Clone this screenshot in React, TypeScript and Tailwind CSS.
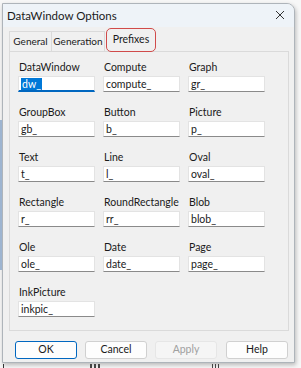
import React from "react";

const rows: [string, string][][] = [
  [["DataWindow", "dw_"], ["Compute", "compute_"], ["Graph", "gr_"]],
  [["GroupBox", "gb_"], ["Button", "b_"], ["Picture", "p_"]],
  [["Text", "t_"], ["Line", "l_"], ["Oval", "oval_"]],
  [["Rectangle", "r_"], ["RoundRectangle", "rr_"], ["Blob", "blob_"]],
  [["Ole", "ole_"], ["Date", "date_"], ["Page", "page_"]],
  [["InkPicture", "inkpic_"]],
];

function Field({ label, value, focused }: { label: string; value: string; focused?: boolean }) {
  return (
    <div className="flex flex-col">
      <div className="h-[14px] leading-[14px] text-[10.5px] text-[#1a1a1a] pl-[1px]">{label}</div>
      <div
        className={
          "mt-[2px] h-[16px] bg-white border border-[#e3e3e3] flex items-center pl-[2px] text-[10.5px] leading-none text-[#1a1a1a] " +
          (focused ? "border-b-[#0067c0] border-b-2" : "border-b-[#8a8a8a]")
        }
      >
        {focused ? (
          <span className="bg-[#0078d7] text-white px-[1px] leading-[12px]">dw_</span>
        ) : (
          <span>{value}</span>
        )}
      </div>
    </div>
  );
}

function Button({ children, primary, disabled }: { children: React.ReactNode; primary?: boolean; disabled?: boolean }) {
  return (
    <div
      className={
        "w-[62px] h-[18px] rounded-[3px] flex items-center justify-center text-[10.5px] " +
        (primary
          ? "border-[1.5px] border-[#0067c0] bg-[#fdfdfd] text-[#1a1a1a]"
          : disabled
          ? "border border-[#e6e6e6] bg-[#f5f5f5] text-[#a0a0a0]"
          : "border border-[#d0d0d0] bg-[#fdfdfd] text-[#1a1a1a]")
      }
    >
      {children}
    </div>
  );
}

export default function App() {
  return (
    <div
      className="w-[301px] h-[368px] bg-[#f7f7f7] overflow-hidden relative"
      style={{ fontFamily: 'Lato, "Noto Sans", sans-serif' }}
    >
      <div className="absolute left-0 top-[120px] w-[2px] h-[150px] bg-[#9db4d0]" />
      <div className="ml-[2px] mt-[3px] w-[293px] h-[360px] bg-[#f0f0f0] border border-[#aeb4ba] rounded-tr-[8px] shadow-[1px_2px_4px_rgba(0,0,0,0.25)] flex flex-col overflow-hidden">
        {/* Title bar */}
        <div className="h-[23px] bg-[#eef3f8] flex items-center justify-between pl-[4px] pr-[6px]">
          <span className="text-[11.5px] text-[#1a1a1a]">DataWindow Options</span>
          <svg width="10" height="10" viewBox="0 0 10 10" className="mb-[1px] mr-[3px]">
            <path d="M1 1 L9 9 M9 1 L1 9" stroke="#333" strokeWidth="1" />
          </svg>
        </div>
        {/* Tabs */}
        <div className="flex items-end pl-[6px] h-[24px] relative">
          <div className="h-[20px] w-[43px] border border-[#dadada] border-b-0 bg-[#f0f0f0] flex items-center justify-center text-[10px] text-[#1a1a1a]">
            General
          </div>
          <div className="h-[20px] w-[53px] border border-l-0 border-[#dadada] border-b-0 bg-[#f0f0f0] flex items-center justify-center text-[10px] text-[#1a1a1a]">
            Generation
          </div>
          <div className="ml-[1px] h-[24px] w-[50px] border-[1.5px] border-[#d04a4a] rounded-[5px] flex items-start justify-center pt-[3px] text-[10.5px] text-[#1a1a1a] relative top-[1px] bg-[#f0f0f0] z-10">
            Prefixes
          </div>
        </div>
        {/* Panel */}
        <div className="ml-[6px] w-[280px] h-[280px] border border-[#dadada] pl-[8px] pt-[8px]">
          <div className="flex flex-col gap-[13px]">
            {rows.map((row, i) => (
              <div key={i} className="grid grid-cols-[77px_77px_77px] gap-x-[8px]">
                {row.map(([l, v], j) => (
                  <Field key={j} label={l} value={v} focused={i === 0 && j === 0} />
                ))}
              </div>
            ))}
          </div>
        </div>
        {/* Buttons */}
        <div className="flex pl-[12px] mt-[10px] gap-[8px]">
          <Button primary>OK</Button>
          <Button>Cancel</Button>
          <Button disabled>Apply</Button>
          <div className="ml-[1px]">
            <Button>Help</Button>
          </div>
        </div>
      </div>
      <div className="flex items-start pl-[3px] mt-[1px] gap-[2px]">
        <div className="w-[1px] h-[4px] bg-[#333]" />
        <div className="ml-[84px] w-[2px] h-[4px] bg-[#444]" />
        <div className="w-[2px] h-[4px] bg-[#444]" />
        <div className="w-[2px] h-[4px] bg-[#444]" />
        <div className="ml-[110px] w-[1px] h-[4px] bg-[#444]" />
        <div className="w-[1px] h-[4px] bg-[#444]" />
        <div className="w-[1px] h-[4px] bg-[#444]" />
      </div>
    </div>
  );
}
